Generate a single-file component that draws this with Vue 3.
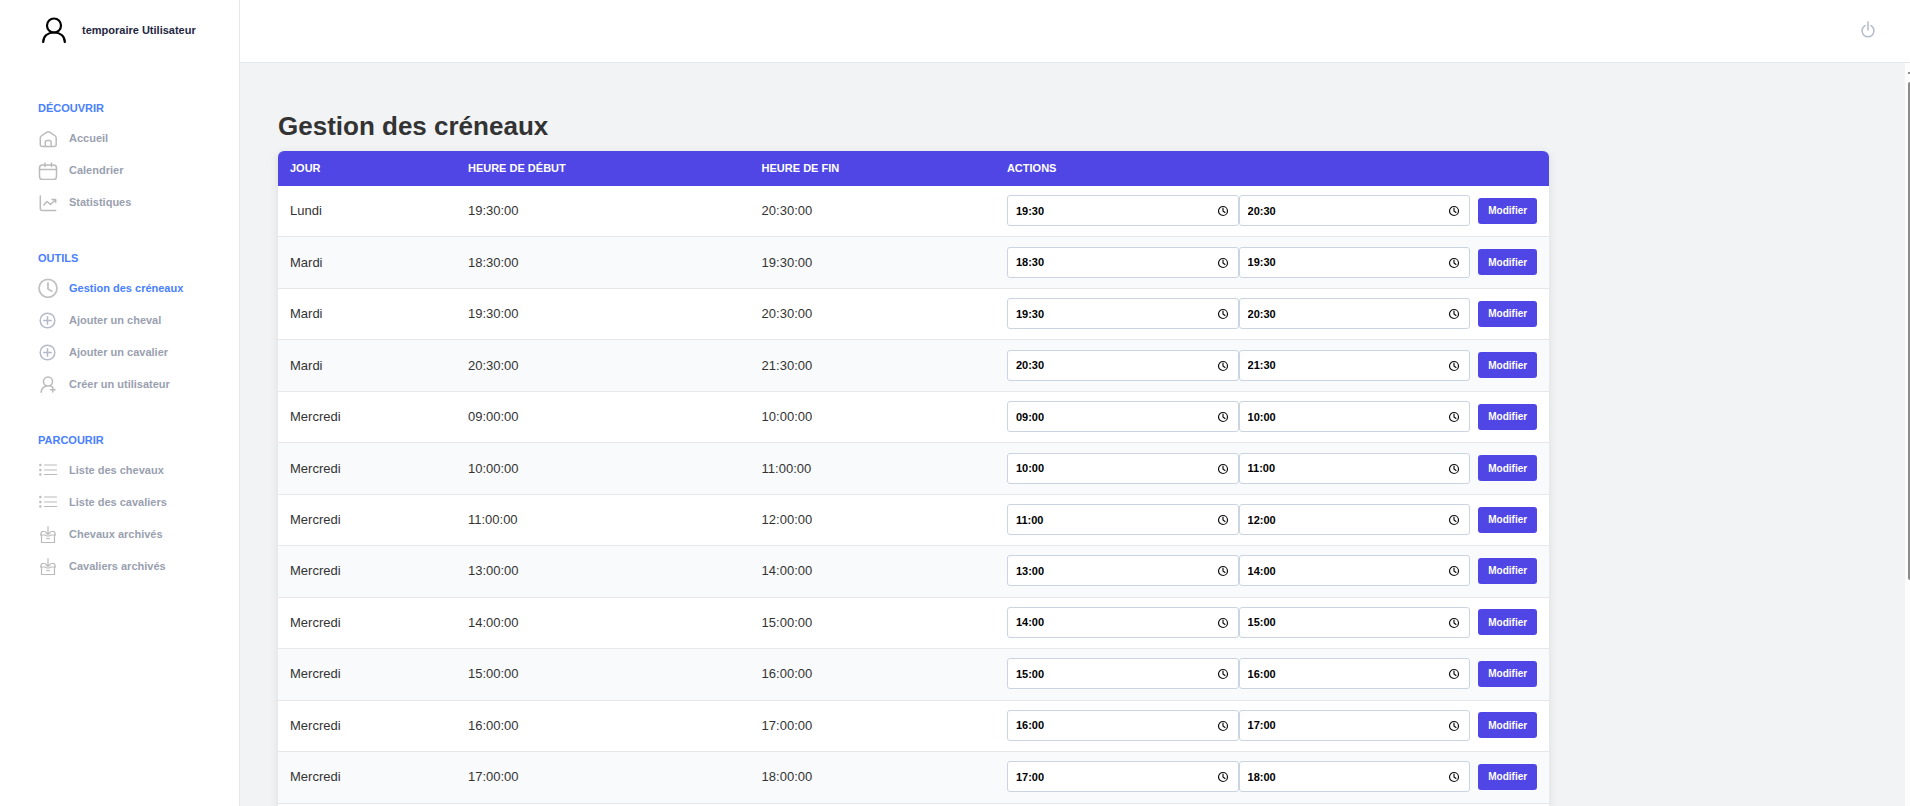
<template>
  <div class="layout">
    <aside class="sidebar">
      <div class="user">
        <svg class="user-icon" viewBox="0 0 26 26">
          <circle cx="13" cy="8.500" r="7" />
          <path d="M2.200 25c0-6 4.600-9.500 10.800-9.500s10.800 3.500 10.800 9.500" />
        </svg>
        <span class="user-name">temporaire Utilisateur</span>
      </div>

      <nav v-for="section in sections" :key="section.title" class="section">
        <h2 class="section-title">{{ section.title }}</h2>
        <a
          v-for="item in section.items"
          :key="item.label"
          href="#"
          class="nav-link"
          :class="{ active: item.active }"
        >
          <!-- Home -->
          <svg v-if="item.icon === 'home'" class="nav-icon" viewBox="0 0 20 20">
            <path d="M2.300 10v6.500a2 2 0 0 0 2 2h11.900a2 2 0 0 0 2-2V10c0-.8-.3-1.400-.9-2l-5.300-3.600a3 3 0 0 0-3.400 0L3.200 8c-.6.600-.9 1.200-.9 2z" />
            <path d="M7.300 18.500v-4.300a1.800 1.800 0 0 1 1.800-1.800h2.200a1.800 1.800 0 0 1 1.800 1.800v4.300" />
          </svg>
          <!-- Calendar -->
          <svg v-else-if="item.icon === 'calendar'" class="nav-icon" viewBox="0 0 20 20">
            <rect x="1.500" y="5" width="17" height="14.500" rx="3" />
            <path d="M1.500 9.500h17M7 3v3.500M13.500 3v3.500" />
          </svg>
          <!-- Chart -->
          <svg v-else-if="item.icon === 'chart'" class="nav-icon" viewBox="0 0 20 20">
            <path d="M2.300 4v12.500a2 2 0 0 0 2 2h13.400M5.800 13l3.200-3.500 3.500 3 5-4.700M14 7.500h3.700v3" />
          </svg>
          <!-- Clock -->
          <svg v-else-if="item.icon === 'clock'" class="nav-icon clock" viewBox="0 0 20 20">
            <circle cx="10" cy="10.300" r="9" />
            <path d="M10 5v6l3.800 2.200" />
          </svg>
          <!-- Plus -->
          <svg v-else-if="item.icon === 'plus'" class="nav-icon plus" viewBox="0 0 20 20">
            <circle cx="9.500" cy="10.500" r="7.300" />
            <path d="M9.500 6.800v7.400M5.800 10.500h7.400" />
          </svg>
          <!-- Add user -->
          <svg v-else-if="item.icon === 'user'" class="nav-icon" viewBox="0 0 20 20">
            <circle cx="10" cy="7.500" r="4.500" />
            <path d="M3.200 18.300c.2-3.300 2.400-5.600 5-6.300M12.500 11.800l1.500 1M14.800 13.500v4.500M12.500 15.700h4.600" />
          </svg>
          <!-- List -->
          <svg v-else-if="item.icon === 'list'" class="nav-icon list" viewBox="0 0 20 20">
            <path d="M6.500 5h12M6.500 10h12M6.500 14.500h12" />
            <path class="dots" d="M2.300 5h.1M2.300 10h.1M2.300 14.500h.1" />
          </svg>
          <!-- Archive -->
          <svg v-else class="nav-icon archive" viewBox="0 0 20 20">
            <path d="M10 2.500v8M7.500 8l2.500 2.500L12.500 8M6.500 7.500H3.700L2.500 11h4.700l1.300 1h3l1.300-1h4.700l-1.200-3.500h-2.800M3.500 11.500v7h13v-7M8.500 14.500h3" />
          </svg>
          <span>{{ item.label }}</span>
        </a>
      </nav>
    </aside>

    <div class="page">
      <header class="topbar">
        <button type="button" class="logout" aria-label="Déconnexion">
          <svg viewBox="0 0 16 18">
            <path d="M5 4.600a6 6 0 1 0 6 0M8 1v8" />
          </svg>
        </button>
      </header>

      <div class="body">
        <main class="content">
          <h1>Gestion des créneaux</h1>
          <table class="slots">
            <thead>
              <tr>
                <th class="col-day">JOUR</th>
                <th class="col-start">HEURE DE DÉBUT</th>
                <th class="col-end">HEURE DE FIN</th>
                <th>ACTIONS</th>
              </tr>
            </thead>
            <tbody>
              <tr v-for="slot in slots" :key="slot.id">
                <td>{{ slot.day }}</td>
                <td>{{ slot.start }}:00</td>
                <td>{{ slot.end }}:00</td>
                <td>
                  <form class="slot-form" @submit.prevent>
                    <label v-for="field in fields" :key="field.key" class="time-field">
                      <input
                        v-model="slot[field.key]"
                        type="text"
                        inputmode="numeric"
                        :aria-label="field.label"
                      />
                      <svg class="time-icon" viewBox="0 0 12 12">
                        <circle cx="6" cy="6" r="4.500" />
                        <path d="M6 3.200V6l2 1.500" />
                      </svg>
                    </label>
                    <button type="submit" class="save">Modifier</button>
                  </form>
                </td>
              </tr>
            </tbody>
          </table>
        </main>
        <div class="scrollbar">
          <span class="scroll-arrow"></span>
          <span class="scroll-thumb"></span>
        </div>
      </div>
    </div>
  </div>
</template>

<script setup>
import { ref } from 'vue'

const sections = [
  {
    title: 'DÉCOUVRIR',
    items: [
      { label: 'Accueil', icon: 'home' },
      { label: 'Calendrier', icon: 'calendar' },
      { label: 'Statistiques', icon: 'chart' }
    ]
  },
  {
    title: 'OUTILS',
    items: [
      { label: 'Gestion des créneaux', icon: 'clock', active: true },
      { label: 'Ajouter un cheval', icon: 'plus' },
      { label: 'Ajouter un cavalier', icon: 'plus' },
      { label: 'Créer un utilisateur', icon: 'user' }
    ]
  },
  {
    title: 'PARCOURIR',
    items: [
      { label: 'Liste des chevaux', icon: 'list' },
      { label: 'Liste des cavaliers', icon: 'list' },
      { label: 'Chevaux archivés', icon: 'archive' },
      { label: 'Cavaliers archivés', icon: 'archive' }
    ]
  }
]

const fields = [
  { key: 'start', label: 'Heure de début' },
  { key: 'end', label: 'Heure de fin' }
]

const slots = ref([
  { id: 1, day: 'Lundi', start: '19:30', end: '20:30' },
  { id: 2, day: 'Mardi', start: '18:30', end: '19:30' },
  { id: 3, day: 'Mardi', start: '19:30', end: '20:30' },
  { id: 4, day: 'Mardi', start: '20:30', end: '21:30' },
  { id: 5, day: 'Mercredi', start: '09:00', end: '10:00' },
  { id: 6, day: 'Mercredi', start: '10:00', end: '11:00' },
  { id: 7, day: 'Mercredi', start: '11:00', end: '12:00' },
  { id: 8, day: 'Mercredi', start: '13:00', end: '14:00' },
  { id: 9, day: 'Mercredi', start: '14:00', end: '15:00' },
  { id: 10, day: 'Mercredi', start: '15:00', end: '16:00' },
  { id: 11, day: 'Mercredi', start: '16:00', end: '17:00' },
  { id: 12, day: 'Mercredi', start: '17:00', end: '18:00' }
])
</script>

<style>
body {
  margin: 0;
  overflow: hidden;
}
</style>

<style scoped>
.layout {
  display: flex;
  height: 100vh;
  background: #fff;
  font-family: "Liberation Sans", Arial, sans-serif;
  font-size: 11px;
}

.layout *,
.layout {
  box-sizing: border-box;
}

svg {
  display: block;
  fill: none;
  stroke: currentColor;
  stroke-linecap: round;
  stroke-linejoin: round;
}

.sidebar {
  flex: none;
  width: 240px;
  border-right: 1px solid #e5e7eb;
}

.user {
  display: flex;
  align-items: center;
  gap: 15px;
  height: 60px;
  padding-left: 41px;
  margin-bottom: 40px;
}

.user-icon {
  width: 26px;
  height: 26px;
  color: #000;
  stroke-width: 2.2;
}

.user-name {
  color: #1e2742;
  font-weight: bold;
}

.section {
  padding-left: 38px;
  margin-bottom: 32px;
}

.section-title {
  margin: 0 0 6px;
  color: #4880ff;
  font-size: 11px;
  line-height: 16px;
  font-weight: bold;
}

.nav-link {
  display: flex;
  align-items: center;
  gap: 11px;
  height: 32px;
  color: #9a9fb0;
  font-weight: bold;
  text-decoration: none;
}

.nav-link.active {
  color: #4880ff;
}

.nav-icon {
  width: 20px;
  height: 20px;
  color: #bbb;
  stroke-width: 1.5;
}

.nav-icon.clock {
  color: #c2c2c2;
  stroke-width: 1.8;
}

.nav-icon.plus {
  color: #b4b9c9;
}

.nav-icon.list,
.nav-icon.archive {
  stroke-width: 1.2;
}

.dots {
  stroke-width: 2.4;
}

.page {
  display: flex;
  flex: 1;
  flex-direction: column;
  min-width: 0;
}

.topbar {
  display: flex;
  flex: none;
  align-items: center;
  justify-content: flex-end;
  height: 63px;
  padding: 0 34px 2px 0;
  border-bottom: 1px solid #e5e7eb;
}

.logout {
  padding: 0;
  border: 0;
  background: none;
  color: #b4b9c9;
  cursor: pointer;
}

.logout svg {
  width: 16px;
  height: 18px;
  stroke-width: 1.5;
}

.body {
  display: flex;
  flex: 1;
  min-height: 0;
}

.content {
  flex: 1;
  padding: 48px 38px;
  overflow: hidden;
  background: #f2f3f5;
}

h1 {
  margin: 0 0 10px;
  color: #333;
  font-size: 26px;
  line-height: 30px;
}

.slots {
  width: 80%;
  padding-bottom: 12px;
  border-spacing: 0;
  border-radius: 6px;
  overflow: hidden;
  table-layout: fixed;
  background: #fff;
  box-shadow: 0 2px 10px rgba(0, 0, 0, 0.1);
  text-align: left;
}

.col-day {
  width: 14%;
}

.col-start {
  width: 23.1%;
}

.col-end {
  width: 19.3%;
}

th {
  height: 35px;
  padding: 0 12px 2px;
  background: #4f46e5;
  color: #fff;
  font-size: 11px;
}

td {
  padding: 0.7em 12px 0.8em;
  border-bottom: 1px solid #e5e7eb;
  color: #333;
  font-size: 13px;
}

tbody tr:nth-child(even) {
  background: #f9fafb;
}

.slot-form {
  display: flex;
  align-items: center;
}

.time-field {
  position: relative;
  flex: 1;
  min-width: 0;
}

.time-field input {
  display: block;
  width: 100%;
  height: 31px;
  padding: 0 8px;
  border: 1px solid #cbd5e1;
  border-radius: 3px;
  background: #fff;
  color: #000;
  font-family: inherit;
  font-size: 11px;
  font-weight: bold;
}

.time-icon {
  position: absolute;
  top: 10px;
  right: 10px;
  width: 12px;
  height: 12px;
  color: #111;
  stroke-width: 1.2;
}

.save {
  width: 59px;
  height: 26px;
  padding: 0;
  margin-left: 8px;
  border: 0;
  border-radius: 3px;
  background: #4f46e5;
  color: #fff;
  font-family: inherit;
  font-size: 10px;
  font-weight: bold;
  cursor: pointer;
}

.scrollbar {
  display: flex;
  flex-direction: column;
  align-items: flex-end;
  width: 5px;
  overflow: hidden;
  background: #fcfcfc;
}

.scroll-arrow {
  width: 2px;
  height: 2px;
  margin: 9px 0 8px;
  background: #8b8b8b;
}

.scroll-thumb {
  width: 2px;
  height: 67%;
  border-radius: 2px 0 0 2px;
  background: #8b8b8b;
}
</style>
